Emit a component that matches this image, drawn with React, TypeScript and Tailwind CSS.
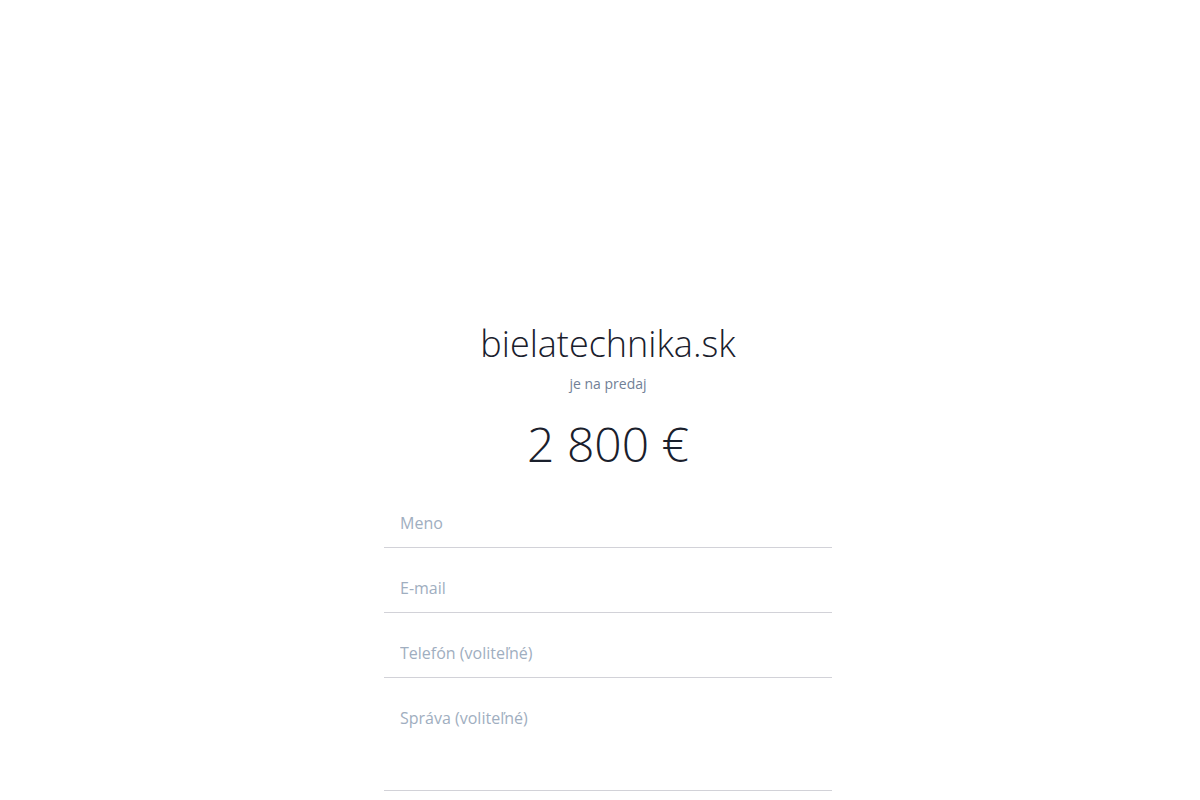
import React from 'react';

const fieldClass =
  'block w-full border-b border-[#d2d2d8] bg-transparent px-4 pt-7 pb-3 text-base leading-6 text-gray-900 placeholder-[#a0aec0] focus:outline-none';

export default function App() {
  return (
    <div className="min-h-screen bg-white pl-4" style={{ fontFamily: '"Open Sans", sans-serif' }}>
      <div className="flex flex-col items-center pt-[324px]">
        <h1 className="text-[36px] font-light leading-[40px] text-[#1a202c]">bielatechnika.sk</h1>
        <p className="mt-[10px] text-sm leading-5 text-[#718096]">je na predaj</p>
        <div className="mt-[26px] text-[48px] font-light leading-[48px] text-[#1a202c]">2 800 €</div>

        <form className="mt-[15px] w-full max-w-md">
          <input type="text" placeholder="Meno" className={fieldClass} />
          <input type="email" placeholder="E-mail" className={fieldClass} />
          <input type="tel" placeholder="Telefón (voliteľné)" className={fieldClass} />
          <textarea placeholder="Správa (voliteľné)" rows={3} className={`${fieldClass} resize-none`} />
        </form>
      </div>
    </div>
  );
}
